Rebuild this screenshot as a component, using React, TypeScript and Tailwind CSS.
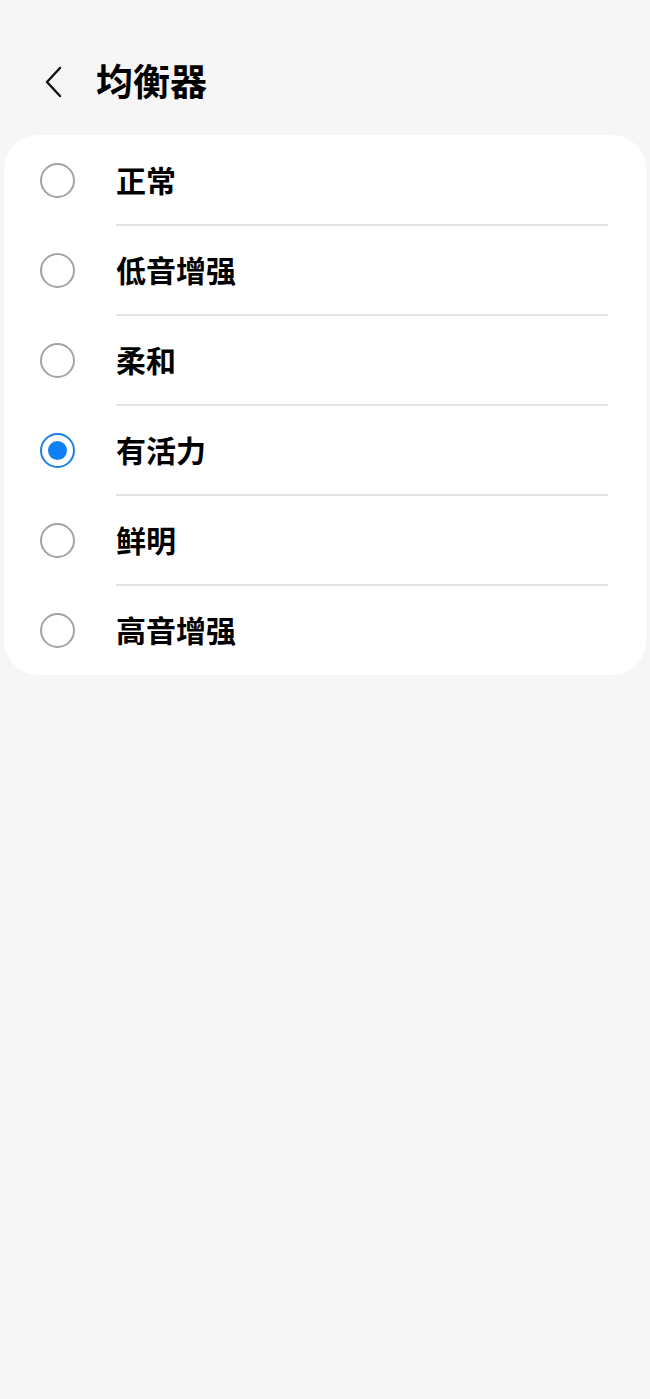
import React, { useState } from 'react';

const OPTIONS = ['正常', '低音增强', '柔和', '有活力', '鲜明', '高音增强'];

const font = { fontFamily: '"Noto Sans CJK SC", "Noto Sans", sans-serif' };

const Radio = ({ checked }: { checked: boolean }) => (
  <div
    className={
      checked
        ? 'w-[35px] h-[35px] rounded-full border-2 border-[#1a7fe6] flex items-center justify-center shrink-0'
        : 'w-[35px] h-[35px] rounded-full border-2 border-[#a3a3a3] shrink-0'
    }
  >
    {checked && <div className="w-[19px] h-[19px] rounded-full bg-[#0f7ff5]" />}
  </div>
);

export default function App() {
  const [selected, setSelected] = useState('有活力');

  return (
    <div className="min-h-[1399px] w-full bg-[#f6f6f6]" style={font}>
      <div className="h-[135px] flex items-center pl-[40px] pt-[26px]">
        <button className="w-[26px] h-[36px] flex items-center justify-center mt-[2px]">
          <svg width="22" height="34" viewBox="0 0 22 34" fill="none">
            <path d="M18 3 L5 17 L18 31" stroke="#111" strokeWidth="2.4" strokeLinecap="round" strokeLinejoin="round" />
          </svg>
        </button>
        <h1 className="ml-[30px] text-[37px] font-bold text-black leading-none">均衡器</h1>
      </div>

      <div className="mx-[4px] bg-white rounded-[34px] overflow-hidden">
        {OPTIONS.map((opt, i) => (
          <div
            key={opt}
            onClick={() => setSelected(opt)}
            className="relative h-[90px] flex items-center cursor-pointer"
          >
            <div className="pl-[36px] w-[112px]">
              <Radio checked={selected === opt} />
            </div>
            <span className="text-[30px] font-bold text-black leading-none mb-[3px]">{opt}</span>
            {i < OPTIONS.length - 1 && (
              <div className="absolute bottom-[-1px] left-[112px] right-[38px] h-[2px] bg-[#e4e4e4]" />
            )}
          </div>
        ))}
      </div>
    </div>
  );
}
